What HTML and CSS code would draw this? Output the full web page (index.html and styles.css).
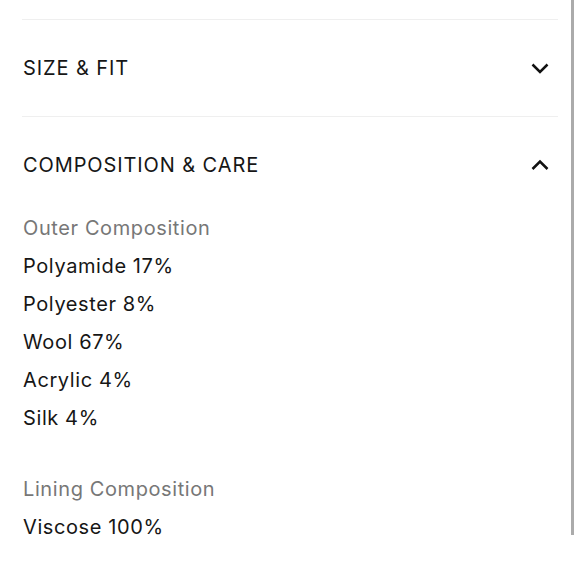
FILE: index.html
```html
<!DOCTYPE html>
<html>
<head>
<meta charset="utf-8">
<link rel="stylesheet" href="styles.css">
</head>
<body>
<div class="page">
  <div class="accordion">
    <div class="divider"></div>
    <div class="acc-header">
      <span class="acc-title">SIZE &amp; FIT</span>
      <svg class="chevron" width="20" height="12" viewBox="0 0 20 12"><path d="M2.5 2.5 L10 10 L17.5 2.5" fill="none" stroke="#111" stroke-width="2.5" stroke-linecap="butt" stroke-linejoin="miter"/></svg>
    </div>
    <div class="divider"></div>
    <div class="acc-header open">
      <span class="acc-title">COMPOSITION &amp; CARE</span>
      <svg class="chevron" width="20" height="12" viewBox="0 0 20 12"><path d="M2.5 10 L10 2.5 L17.5 10" fill="none" stroke="#111" stroke-width="2.5" stroke-linecap="butt" stroke-linejoin="miter"/></svg>
    </div>
    <div class="acc-body">
      <div class="group">
        <div class="label">Outer Composition</div>
        <div class="item">Polyamide 17%</div>
        <div class="item">Polyester 8%</div>
        <div class="item">Wool 67%</div>
        <div class="item">Acrylic 4%</div>
        <div class="item">Silk 4%</div>
      </div>
      <div class="group">
        <div class="label">Lining Composition</div>
        <div class="item">Viscose 100%</div>
      </div>
    </div>
  </div>
  <div class="scrollbar"></div>
</div>
</body>
</html>
```
FILE: styles.css
```css
html, body {
  margin: 0;
  padding: 0;
  background: #fff;
}
body {
  font-family: Inter, "Liberation Sans", Arial, sans-serif;
  color: #161616;
  width: 580px;
  height: 580px;
  overflow: hidden;
}
.page {
  display: flex;
  height: 580px;
}
.accordion {
  width: 536px;
  padding: 19px 0 0 22px;
}
.divider {
  height: 1px;
  background: #efefef;
}
.acc-header {
  display: flex;
  justify-content: space-between;
  align-items: center;
  padding: 36px 8px 36px 1px;
  line-height: 24px;
}
.acc-header.open {
  padding-bottom: 32px;
}
.acc-title {
  font-size: 20px;
  letter-spacing: 0.9px;
}
.chevron {
  display: block;
}
.acc-body {
  padding-left: 1px;
}
.group + .group {
  margin-top: 33px;
}
.label, .item {
  font-size: 20px;
  line-height: 38px;
  letter-spacing: 0.6px;
}
.label {
  color: #777;
}
.scrollbar {
  width: 3px;
  height: 535px;
  margin-left: 13px;
  background: #ababab;
}
```
